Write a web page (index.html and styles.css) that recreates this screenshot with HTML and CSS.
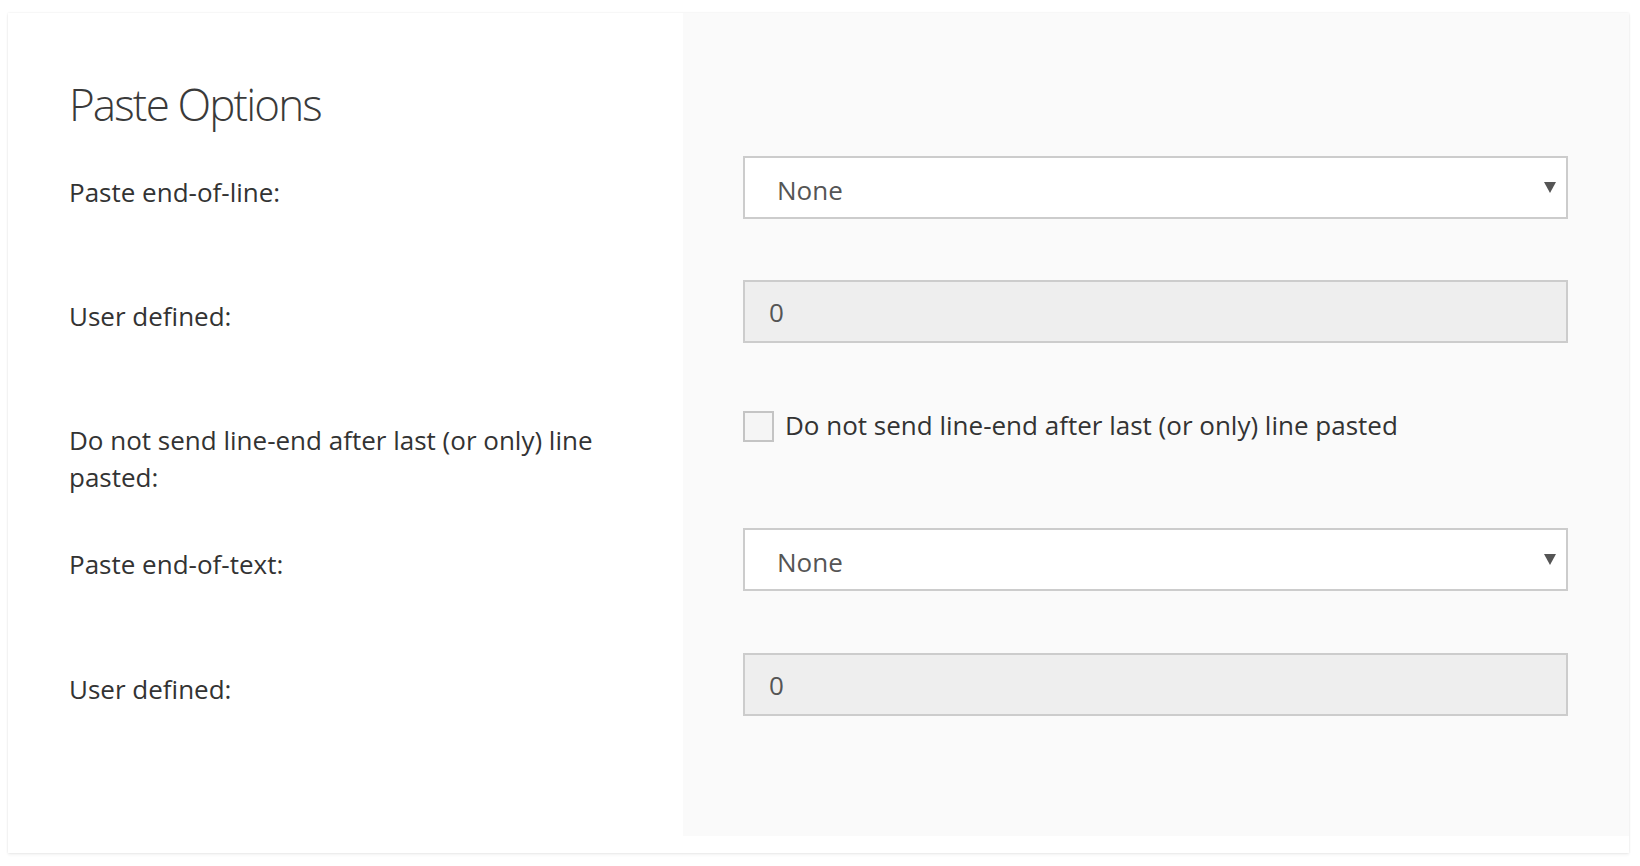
FILE: index.html
```html
<!DOCTYPE html>
<html lang="en">
<head>
<meta charset="utf-8">
<title>Paste Options</title>
<link rel="stylesheet" href="styles.css">
</head>
<body>
<div class="card">
  <div class="label-cell title-cell"><h1 class="title">Paste Options</h1></div>
  <div class="control-cell"></div>

  <div class="label-cell lbl-std">Paste end-of-line:</div>
  <div class="control-cell">
    <div class="select">
      <span class="select-value">None</span>
      <svg class="select-arrow" width="12" height="11" viewBox="0 0 12 11"><polygon points="0,0 12,0 6,11" fill="#555"/></svg>
    </div>
  </div>

  <div class="label-cell lbl-std">User defined:</div>
  <div class="control-cell">
    <div class="input">0</div>
  </div>

  <div class="label-cell lbl-check">Do not send line-end after last (or only) line pasted:</div>
  <div class="control-cell">
    <label class="check">
      <span class="check-box"></span>
      <span class="check-text">Do not send line-end after last (or only) line pasted</span>
    </label>
  </div>

  <div class="label-cell lbl-std">Paste end-of-text:</div>
  <div class="control-cell">
    <div class="select">
      <span class="select-value">None</span>
      <svg class="select-arrow" width="12" height="11" viewBox="0 0 12 11"><polygon points="0,0 12,0 6,11" fill="#555"/></svg>
    </div>
  </div>

  <div class="label-cell lbl-std">User defined:</div>
  <div class="control-cell">
    <div class="input">0</div>
  </div>
</div>
</body>
</html>
```

FILE: styles.css
```css
html, body {
  margin: 0;
}
body {
  padding: 13px 11px 13px 8px;
  background: #fff;
  font-family: "Open Sans", "Liberation Sans", sans-serif;
  font-size: 26px;
  color: #333;
}
.card {
  display: grid;
  grid-template-columns: 675px 1fr;
  grid-template-rows: 143px 124px 131px 117px 125px 183px;
  padding-bottom: 17px;
  background: #fff;
  box-shadow: 0 0 2px rgba(0, 0, 0, 0.10), 0 2px 3px rgba(0, 0, 0, 0.05);
}
.label-cell {
  padding-left: 61px;
  padding-right: 40px;
  line-height: 36.5px;
}
.title-cell {
  padding-top: 61px;
}
.title {
  margin: 0;
  font-family: "Open Sans Light", "Open Sans", "Liberation Sans", sans-serif;
  font-size: 44px;
  font-weight: 300;
  letter-spacing: -1.9px;
  line-height: normal;
  color: #3a3a3a;
}
.lbl-std {
  padding-top: 17.6px;
}
.lbl-check {
  padding-top: 11px;
}
.control-cell {
  background: #fafafa;
  padding: 0 61px 0 60px;
}
.select {
  box-sizing: border-box;
  height: 63px;
  border: 2px solid #ccc;
  background: #fff;
  display: flex;
  align-items: center;
  justify-content: space-between;
  padding: 0 10px 0 32px;
  color: #555;
}
.select-value {
  padding-top: 5px;
}
.select-arrow {
  display: block;
}
.input {
  box-sizing: border-box;
  height: 63px;
  border: 2px solid #ccc;
  background: #eee;
  display: flex;
  align-items: center;
  padding: 0 24px;
  color: #555;
}
.check {
  display: flex;
  align-items: flex-start;
  gap: 11px;
}
.check-box {
  box-sizing: border-box;
  flex: none;
  width: 31px;
  height: 31px;
  border: 2px solid #c4c4c4;
  background: #f5f5f5;
}
.check-text {
  margin-top: -4px;
  line-height: normal;
  color: #333;
}
```
